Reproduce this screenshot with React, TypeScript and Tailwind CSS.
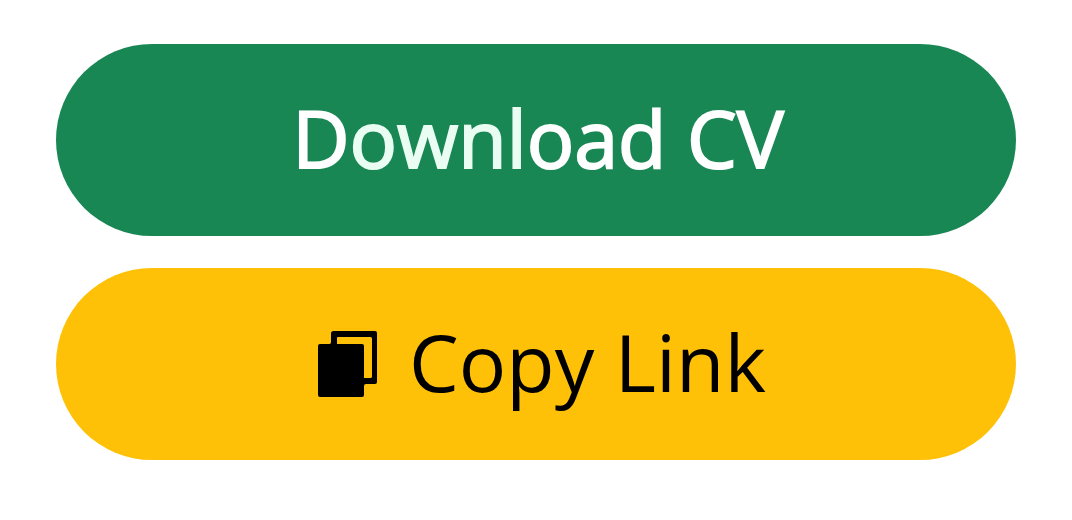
export default function App() {
  return (
    <main className="flex min-h-screen flex-col gap-8 bg-white px-14 pt-11 pb-14 font-['Open_Sans',sans-serif]">
      <button
        type="button"
        className="flex h-48 w-full items-center justify-center rounded-full bg-[#198754] pb-1 pl-1 text-[79px] leading-[96px] text-white [-webkit-text-stroke:2px_currentColor] [stroke-linejoin:round]"
      >
        <span>
          D<span className="text-[#eafdf3] [-webkit-text-stroke:2px_#eafdf3]">ownl</span>oad CV
        </span>
      </button>
      <button
        type="button"
        className="flex h-48 w-full items-center justify-center gap-8 rounded-full bg-[#ffc107] pl-3 text-[79px] leading-[96px] text-black"
      >
        <svg className="shrink-0" width="59" height="66" viewBox="0 0 59 66" aria-hidden="true">
          <path
            fillRule="evenodd"
            d="M15.5 0H57Q59 0 59 2V51Q59 53 57 53H48Q46 53 46 55V64Q46 66 44 66H2Q0 66 0 64V15Q0 13 2 13H11.500Q13 13 13 11V2.500Q13 0 15.500 0ZM20 6Q19 6 19 7V13H44Q46 13 46 15V47H52.500Q54 47 54 45.500V7.500Q54 6 52.500 6Z"
          />
        </svg>
        <span className="pb-1">Copy Link</span>
      </button>
    </main>
  );
}
